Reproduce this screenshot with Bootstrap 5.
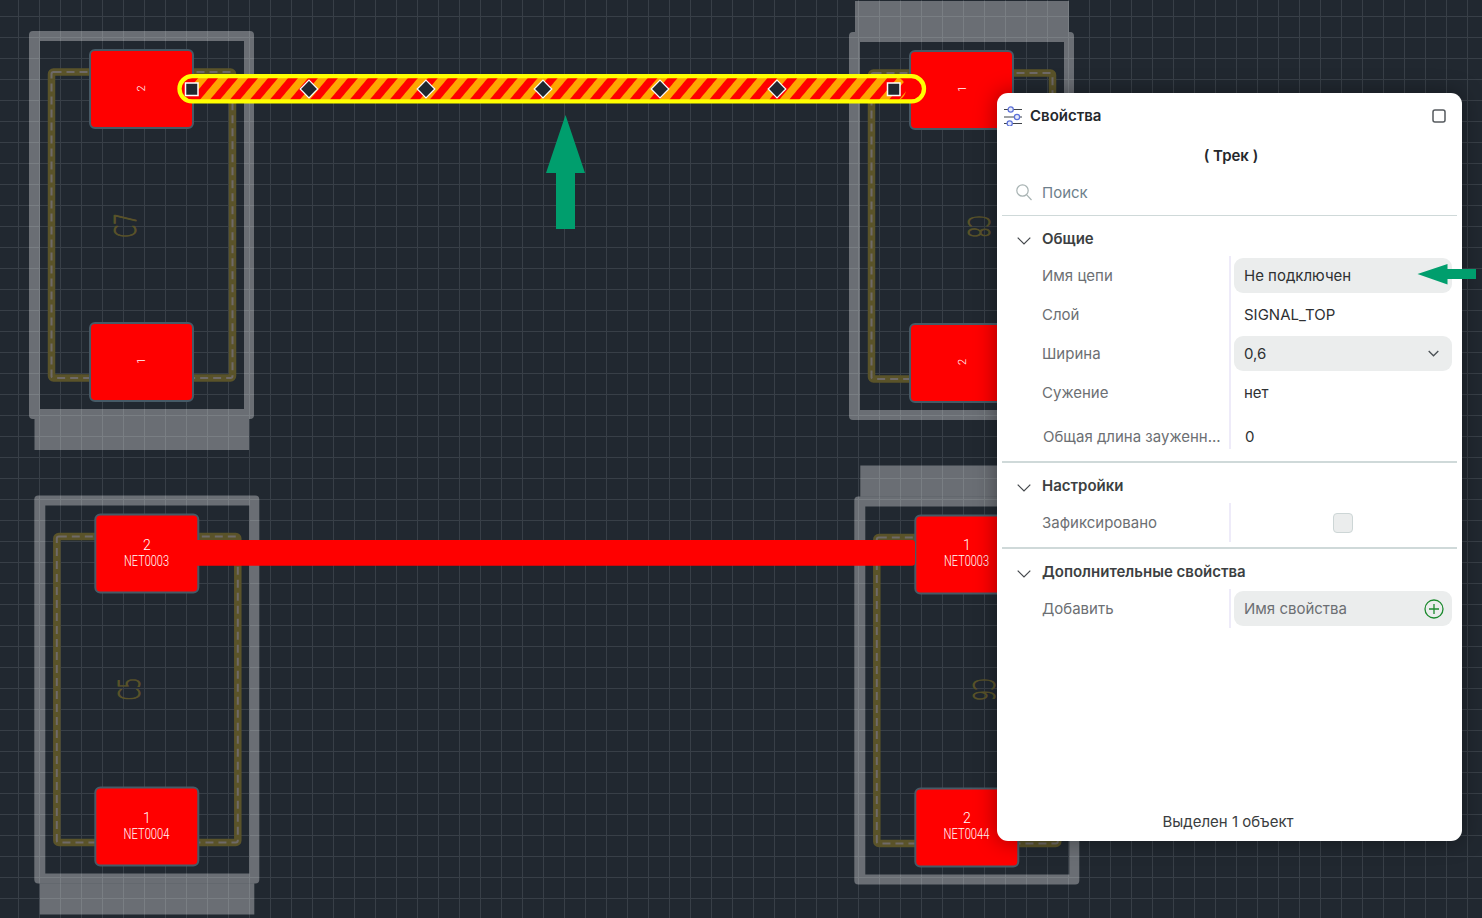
<!DOCTYPE html>
<html lang="ru">
<head>
<meta charset="utf-8">
<title>Свойства</title>
<link href="https://cdn.jsdelivr.net/npm/bootstrap@5.3.0/dist/css/bootstrap.min.css" rel="stylesheet">
<style>
html,body{margin:0;height:100%;overflow:hidden;background:#212830}
.stage{width:1482px;height:918px;background:#212830;overflow:hidden}
.board{left:0;top:0;width:1482px;height:918px}
.silk{fill:#fff;opacity:.33}
.assy{fill:none;stroke:#5a5329;stroke-width:7.5;stroke-linejoin:round}
.assydash{fill:none;stroke:#6f6a68;stroke-width:2;stroke-dasharray:8 5}
.padbox{fill:#f00;stroke:#465a66;stroke-width:2}
.refdes{font-family:"DejaVu Sans",sans-serif;font-weight:200;font-size:30px;fill:#5a5329;stroke:#5a5329;stroke-width:1;stroke-linejoin:round}
.padtxt{font-family:"Roboto",sans-serif;font-weight:300;fill:#fff;text-anchor:middle}
.panel{left:997px;top:93px;width:465px;height:748px;background:#fff;border-radius:11px;box-shadow:0 0 22px rgba(0,0,0,.38);font-family:"Inter",sans-serif;font-size:15px;color:#2b2b2b}
.phead{height:45px;padding:0 16px 0 6px}
.ptitle{font-weight:600;color:#25282c;padding-top:2px}
.titlegap{gap:7px}
.ptype{height:36px;padding-left:3px;font-weight:600;color:#25282c}
.psearch{height:41px;padding:0 0 4px 19px;color:#6e7f8c;gap:10px}
.psearch span{padding-top:2px}
.rule-thin{height:1px;background:#cfd9d9;margin:0 5px}
.rule-thick{height:2px;background:#cfd9d9;margin:0 5px}
.sechead{height:40px;padding:7px 0 0 20px;gap:11px;font-weight:600;color:#3c3f42}
.chev{margin-top:3px}
.gap-after{margin-top:15px}
.gap-small{margin-top:5px}
.prow{display:grid;grid-template-columns:232px 1fr;height:39px;padding-right:10px}
.prow-last{height:34px}
.plabel{padding-left:45px;padding-top:2px;color:#6c6f73}
.pvalue{border-left:2px solid #eeebf9;padding-left:3px;color:#2f3133}
.pvaltext{padding-left:10px;padding-top:2px}
.fieldbox{height:35px;background:#ebeded;border-radius:9px;padding:2px 8px 0 10px}
.selectbox{padding-right:13px}
.tick{width:20px;height:20px;background:#ebeded;border:1px solid #cdd6d6;border-radius:4px}
.muted-val{color:#6c6f73}
.pfoot{height:40px;padding:2px 3px 0 0;color:#3a3d40}
.plabel.shift-row,.shift-row{padding-top:14px}
.shift-label{padding-left:46px}
.shift-val{padding-left:11px}
.iconup{margin-top:-2px}
.overlay{left:0;top:0;width:1482px;height:918px;pointer-events:none}
</style>
</head>
<body>
<div class="stage position-relative">
<svg class="board position-absolute" viewBox="0 0 1482 918" xmlns="http://www.w3.org/2000/svg">
  <defs>
    <pattern id="grid" x="18" y="16" width="21" height="21" patternUnits="userSpaceOnUse">
      <rect x="0" y="0" width="1" height="21" fill="#383f47"/>
      <rect x="0" y="0" width="21" height="1" fill="#383f47"/>
    </pattern>
    <pattern id="hazard" width="15.3" height="15.3" patternUnits="userSpaceOnUse" patternTransform="translate(4 0) rotate(40)">
      <rect width="15.3" height="15.3" fill="#f00"/>
      <rect width="7.65" height="15.3" fill="#ffa500"/>
    </pattern>
    <g id="frame">
      <path class="silk" fill-rule="evenodd" d="M33 31H250a4 4 0 0 1 4 4V415a4 4 0 0 1-4 4H33a4 4 0 0 1-4-4V35a4 4 0 0 1 4-4ZM40 41V409H244V41Z"/>
      <rect class="assy" x="51.5" y="72" width="181" height="306" rx="2"/>
      <rect class="assydash" x="51.5" y="72" width="181" height="306" rx="2"/>
    </g>
    <g id="pads">
      <rect class="padbox" x="90" y="50" width="103" height="78" rx="5"/>
      <rect class="padbox" x="90" y="323" width="103" height="78" rx="5"/>
    </g>
  </defs>
  <rect width="1482" height="918" fill="url(#grid)"/>

  <!-- C7 -->
  <g>
    <rect class="silk" x="34.5" y="419" width="214.5" height="31"/>
    <use href="#frame"/>
    <use href="#pads"/>
    <text class="refdes" transform="translate(136 238) rotate(-90)" textLength="25" lengthAdjust="spacingAndGlyphs">C7</text>
    <text class="padtxt" font-size="11" transform="translate(145 88.500) rotate(-90)">2</text>
    <text class="padtxt" font-size="11" transform="translate(145 361) rotate(-90)">1</text>
  </g>
  <!-- C8 -->
  <g transform="translate(820 1)">
    <rect class="silk" x="35" y="0" width="214" height="31"/>
    <use href="#frame"/>
    <use href="#pads"/>
    <text class="refdes" transform="translate(148 214) rotate(90)" textLength="23" lengthAdjust="spacingAndGlyphs">C8</text>
    <text class="padtxt" font-size="11" transform="translate(146 88) rotate(-90)">1</text>
    <text class="padtxt" font-size="11" transform="translate(146 361) rotate(-90)">2</text>
  </g>
  <!-- C5 -->
  <g transform="translate(5.300 464.500)">
    <rect class="silk" x="34.500" y="419" width="214.500" height="31"/>
    <use href="#frame"/>
    <use href="#pads"/>
    <text class="refdes" transform="translate(135 236) rotate(-90)" textLength="23" lengthAdjust="spacingAndGlyphs">C5</text>
  </g>
  <text class="padtxt" font-size="14" x="147" y="550">2</text>
  <text class="padtxt" font-size="14.500" x="146.500" y="565.800" textLength="45" lengthAdjust="spacingAndGlyphs">NET0003</text>
  <text class="padtxt" font-size="14" x="147" y="823">1</text>
  <text class="padtxt" font-size="14.500" x="146.500" y="838.800" textLength="46" lengthAdjust="spacingAndGlyphs">NET0004</text>
  <!-- C6 -->
  <g transform="translate(825.300 465.500)">
    <rect class="silk" x="35" y="0" width="214" height="31"/>
    <use href="#frame"/>
    <use href="#pads"/>
    <text class="refdes" transform="translate(148 212.500) rotate(90)" textLength="23" lengthAdjust="spacingAndGlyphs">C6</text>
  </g>
  <text class="padtxt" font-size="14" x="967" y="550">1</text>
  <text class="padtxt" font-size="14.500" x="966.500" y="565.800" textLength="45" lengthAdjust="spacingAndGlyphs">NET0003</text>
  <text class="padtxt" font-size="14" x="967" y="823">2</text>
  <text class="padtxt" font-size="14.500" x="966.500" y="838.800" textLength="46" lengthAdjust="spacingAndGlyphs">NET0044</text>

  <!-- plain track -->
  <rect x="190" y="540" width="725" height="25.700" rx="3" fill="#f00"/>

  <!-- selected track -->
  <rect x="179.500" y="76.200" width="744.500" height="25.200" rx="12.600" fill="#f00"/>
  <rect x="192" y="76.500" width="714" height="25" rx="12.500" fill="url(#hazard)"/>
  <rect x="179.500" y="76.200" width="744.500" height="25.200" rx="12.600" fill="none" stroke="#ff0" stroke-width="4.300"/>
  <rect x="185.500" y="83" width="12.500" height="12.500" fill="#212830" stroke="#fff" stroke-width="1.500"/>
  <rect x="887.500" y="83" width="12.500" height="12.500" fill="#212830" stroke="#fff" stroke-width="1.500"/>
  <path d="M309 80.200l8.800 8.800-8.800 8.800-8.800-8.800Z" fill="#212830" stroke="#fff" stroke-width="1.200"/>
  <path d="M426 80.200l8.800 8.800-8.800 8.800-8.800-8.800Z" fill="#212830" stroke="#fff" stroke-width="1.200"/>
  <path d="M543 80.200l8.800 8.800-8.800 8.800-8.800-8.800Z" fill="#212830" stroke="#fff" stroke-width="1.200"/>
  <path d="M660 80.200l8.800 8.800-8.800 8.800-8.800-8.800Z" fill="#212830" stroke="#fff" stroke-width="1.200"/>
  <path d="M777 80.200l8.800 8.800-8.800 8.800-8.800-8.800Z" fill="#212830" stroke="#fff" stroke-width="1.200"/>
</svg>

<aside class="panel position-absolute d-flex flex-column">
  <div class="phead d-flex align-items-center justify-content-between">
    <div class="d-flex align-items-center titlegap">
      <svg width="20" height="20" viewBox="0 0 20 20" fill="none">
        <path d="M1 5h18M1 12.500h18M1 19h18" transform="translate(0 -1.500)" stroke="#3f444a" stroke-width="1.100"/>
        <circle cx="7.700" cy="3.500" r="2.600" fill="#e6eafb" stroke="#5b70d9" stroke-width="1.200"/>
        <circle cx="14" cy="11" r="2.600" fill="#e6eafb" stroke="#5b70d9" stroke-width="1.200"/>
        <circle cx="6.700" cy="17.500" r="2.600" fill="#e6eafb" stroke="#5b70d9" stroke-width="1.200"/>
      </svg>
      <span class="ptitle">Свойства</span>
    </div>
    <svg width="14" height="14" viewBox="0 0 14 14" fill="none"><rect x="1" y="1" width="12" height="12" rx="2" stroke="#555a5e" stroke-width="1.500"/></svg>
  </div>
  <div class="ptype d-flex align-items-center justify-content-center">( Трек )</div>
  <div class="psearch d-flex align-items-center">
    <svg width="16" height="17" viewBox="0 0 16 17" fill="none"><circle cx="6.500" cy="6.500" r="5.700" stroke="#a8b3b3" stroke-width="1.200"/><path d="M10.700 10.800 15.500 16" stroke="#a8b3b3" stroke-width="1.200"/></svg>
    <span>Поиск</span>
  </div>
  <div class="rule-thin"></div>

  <div class="sechead d-flex align-items-center">
    <svg class="chev" width="14" height="8" viewBox="0 0 14 8" fill="none"><path d="M.7.700 7 7l6.300-6.300" stroke="#44484c" stroke-width="1.200"/></svg>
    <span>Общие</span>
  </div>
  <div class="prow">
    <div class="plabel d-flex align-items-center">Имя цепи</div>
    <div class="pvalue d-flex align-items-center"><div class="fieldbox flex-grow-1 d-flex align-items-center">Не подключен</div></div>
  </div>
  <div class="prow">
    <div class="plabel d-flex align-items-center">Слой</div>
    <div class="pvalue d-flex align-items-center"><span class="pvaltext">SIGNAL_TOP</span></div>
  </div>
  <div class="prow">
    <div class="plabel d-flex align-items-center">Ширина</div>
    <div class="pvalue d-flex align-items-center"><div class="fieldbox selectbox flex-grow-1 d-flex align-items-center justify-content-between"><span>0,6</span><svg class="iconup" width="11" height="7" viewBox="0 0 11 7" fill="none"><path d="M.7 1l4.800 4.800L10.300 1" stroke="#4a5054" stroke-width="1.300"/></svg></div></div>
  </div>
  <div class="prow">
    <div class="plabel d-flex align-items-center">Сужение</div>
    <div class="pvalue d-flex align-items-center"><span class="pvaltext">нет</span></div>
  </div>
  <div class="prow prow-last">
    <div class="plabel shift-label shift-row d-flex align-items-center text-nowrap">Общая длина зауженн...</div>
    <div class="pvalue shift-row d-flex align-items-center"><span class="shift-val">0</span></div>
  </div>
  <div class="rule-thick gap-after"></div>

  <div class="sechead d-flex align-items-center">
    <svg class="chev" width="14" height="8" viewBox="0 0 14 8" fill="none"><path d="M.7.700 7 7l6.300-6.300" stroke="#44484c" stroke-width="1.200"/></svg>
    <span>Настройки</span>
  </div>
  <div class="prow">
    <div class="plabel d-flex align-items-center">Зафиксировано</div>
    <div class="pvalue d-flex align-items-center justify-content-center"><div class="tick"></div></div>
  </div>
  <div class="rule-thick gap-small"></div>

  <div class="sechead d-flex align-items-center">
    <svg class="chev" width="14" height="8" viewBox="0 0 14 8" fill="none"><path d="M.7.700 7 7l6.300-6.300" stroke="#44484c" stroke-width="1.200"/></svg>
    <span>Дополнительные свойства</span>
  </div>
  <div class="prow">
    <div class="plabel d-flex align-items-center">Добавить</div>
    <div class="pvalue d-flex align-items-center"><div class="fieldbox flex-grow-1 d-flex align-items-center justify-content-between"><span class="muted-val">Имя свойства</span><svg class="iconup" width="20" height="20" viewBox="0 0 20 20" fill="none"><circle cx="10" cy="10" r="9" stroke="#1c8a2e" stroke-width="1.300"/><path d="M10 5v10M5 10h10" stroke="#1c8a2e" stroke-width="1.300"/></svg></div></div>
  </div>

  <div class="pfoot mt-auto d-flex align-items-center justify-content-center">Выделен 1 объект</div>
</aside>

<svg class="overlay position-absolute" viewBox="0 0 1482 918" xmlns="http://www.w3.org/2000/svg">
  <path d="M565.500 115 585 173H575V229H556V173H546Z" fill="#009e6d"/>
  <path d="M1417.500 274 1447.500 264V269H1476V279H1447.500V284.500Z" fill="#009e6d"/>
</svg>
</div>
<script src="https://cdn.jsdelivr.net/npm/bootstrap@5.3.0/dist/js/bootstrap.bundle.min.js"></script>
</body>
</html>
